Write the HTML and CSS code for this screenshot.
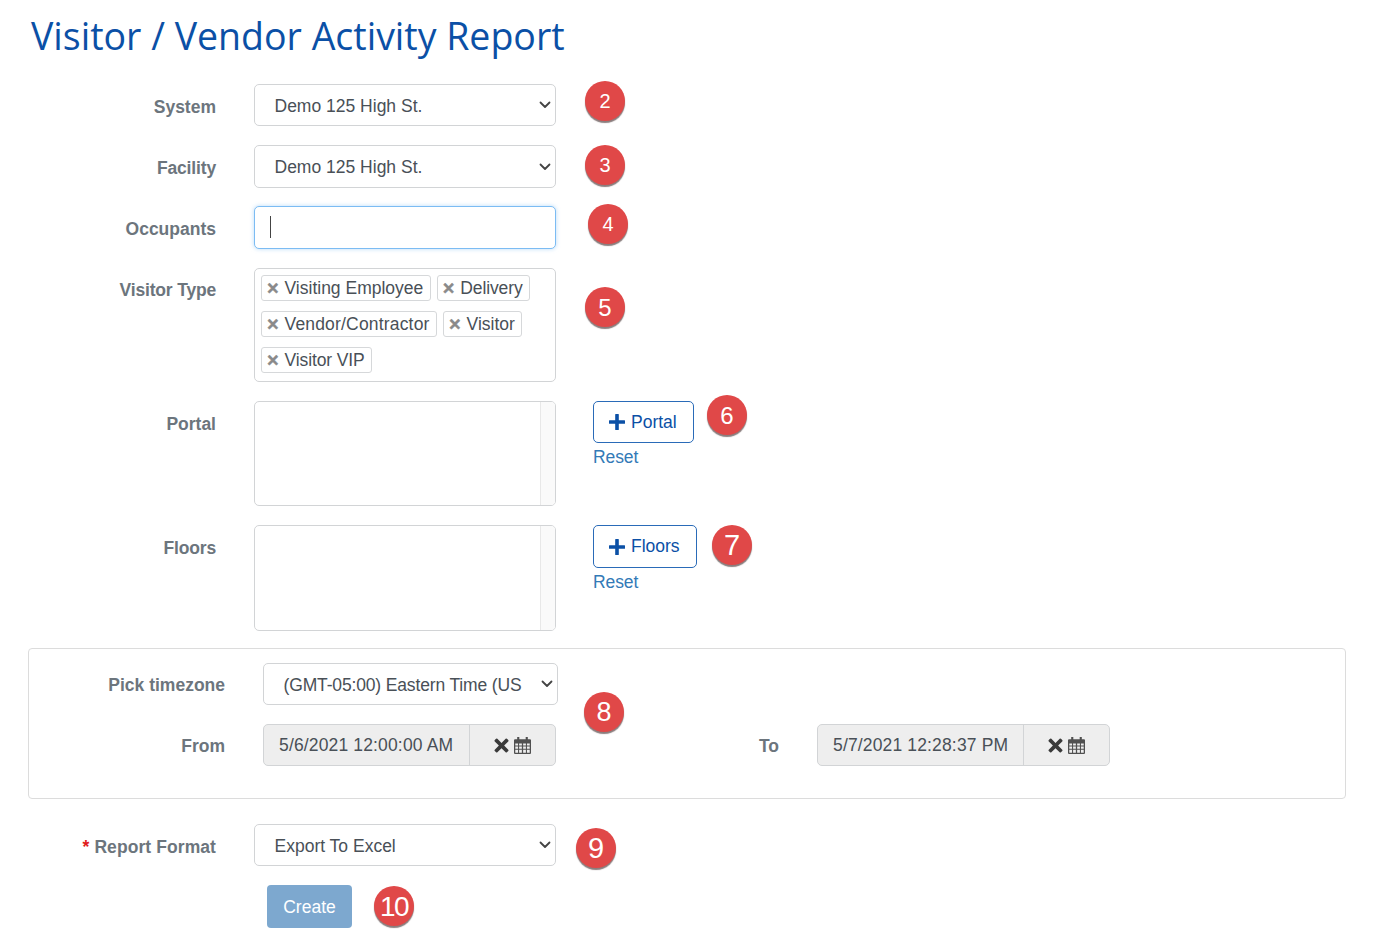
FILE: index.html
```html
<!DOCTYPE html>
<html lang="en">
<head>
<meta charset="utf-8">
<title>Visitor / Vendor Activity Report</title>
<link rel="stylesheet" href="styles.css">
</head>
<body>
<main class="page">
  <h1 class="title">Visitor / Vendor Activity Report</h1>

  <div class="row row-system">
    <label class="label">System</label>
    <select class="control"><option>Demo 125 High St.</option></select>
  </div>
  <div class="row row-facility">
    <label class="label label-narrow">Facility</label>
    <select class="control"><option>Demo 125 High St.</option></select>
  </div>
  <div class="row row-occupants">
    <label class="label">Occupants</label>
    <div class="control input-focus"><span class="caret"></span></div>
  </div>
  <div class="row row-type">
    <label class="label label-type">Visitor Type</label>
    <div class="control tags">
      <span class="tag"><b class="tag-x">×</b>Visiting Employee</span>
      <span class="tag tag-tight"><b class="tag-x">×</b>Delivery</span>
      <span class="tag tag-wide"><b class="tag-x">×</b>Vendor/Contractor</span>
      <span class="tag"><b class="tag-x">×</b>Visitor</span>
      <span class="tag tag-tight"><b class="tag-x">×</b>Visitor VIP</span>
    </div>
  </div>
  <div class="row row-portal">
    <label class="label">Portal</label>
    <div class="control listbox"><div class="scroll-strip"></div></div>
    <div class="actions">
      <button class="add-btn add-portal"><svg class="plus" viewBox="0 0 16 16"><path d="M6.200 .5a.5.5 0 0 1 .5-.5h2.600a.5.5 0 0 1 .5.5v5.700h5.700a.5.5 0 0 1 .5.5v2.600a.5.5 0 0 1-.5.5H9.800v5.700a.5.5 0 0 1-.5.5H6.700a.5.5 0 0 1-.5-.5V9.800H.5a.5.5 0 0 1-.5-.5V6.700a.5.5 0 0 1 .5-.5h5.700z"/></svg>Portal</button>
      <a class="reset">Reset</a>
    </div>
  </div>
  <div class="row row-floors">
    <label class="label label-floors">Floors</label>
    <div class="control listbox"><div class="scroll-strip"></div></div>
    <div class="actions">
      <button class="add-btn add-floors"><svg class="plus" viewBox="0 0 16 16"><path d="M6.200 .5a.5.5 0 0 1 .5-.5h2.600a.5.5 0 0 1 .5.5v5.700h5.700a.5.5 0 0 1 .5.5v2.600a.5.5 0 0 1-.5.5H9.800v5.700a.5.5 0 0 1-.5.5H6.700a.5.5 0 0 1-.5-.5V9.800H.5a.5.5 0 0 1-.5-.5V6.700a.5.5 0 0 1 .5-.5h5.700z"/></svg>Floors</button>
      <a class="reset">Reset</a>
    </div>
  </div>

  <section class="panel">
    <div class="panel-row panel-tz">
      <label class="label">Pick timezone</label>
      <select class="control tz"><option>(GMT-05:00) Eastern Time (US</option></select>
    </div>
    <div class="panel-row">
      <label class="label">From</label>
      <div class="date">
        <span class="date-value">5/6/2021 12:00:00 AM</span>
        <span class="date-icons">
          <svg class="ico-x" viewBox="0 0 16 16"><path d="M3.6 .8 8 5.2 12.4 .8a1 1 0 0 1 1.4 0l1.400 1.400a1 1 0 0 1 0 1.400L10.800 8l4.400 4.400a1 1 0 0 1 0 1.400l-1.400 1.400a1 1 0 0 1-1.400 0L8 10.800l-4.400 4.400a1 1 0 0 1-1.400 0L.8 13.800a1 1 0 0 1 0-1.400L5.200 8 .8 3.600a1 1 0 0 1 0-1.400L2.200 .8a1 1 0 0 1 1.400 0z"/></svg>
          <svg class="ico-cal" viewBox="0 0 16 16"><path fill-rule="evenodd" d="M3 0h2v2h6V0h2v2h2a1 1 0 0 1 1 1v12a1 1 0 0 1-1 1H1a1 1 0 0 1-1-1V3a1 1 0 0 1 1-1h2zM1.200 6v2h2.600V6zm3.600 0v2h2.600V6zm3.800 0v2h2.600V6zm3.600 0v2h2.600V6zM1.200 9v2h2.600V9zm3.600 0v2h2.600V9zm3.800 0v2h2.600V9zm3.600 0v2h2.600V9zM1.200 12v2.800h2.600V12zm3.600 0v2.800h2.600V12zm3.800 0v2.800h2.600V12zm3.600 0v2.800h2.600V12z"/></svg>
        </span>
      </div>
      <label class="label">To</label>
      <div class="date">
        <span class="date-value">5/7/2021 12:28:37 PM</span>
        <span class="date-icons">
          <svg class="ico-x" viewBox="0 0 16 16"><path d="M3.6 .8 8 5.2 12.4 .8a1 1 0 0 1 1.4 0l1.400 1.400a1 1 0 0 1 0 1.400L10.800 8l4.400 4.400a1 1 0 0 1 0 1.400l-1.400 1.400a1 1 0 0 1-1.400 0L8 10.800l-4.400 4.400a1 1 0 0 1-1.400 0L.8 13.800a1 1 0 0 1 0-1.400L5.200 8 .8 3.600a1 1 0 0 1 0-1.400L2.200 .8a1 1 0 0 1 1.400 0z"/></svg>
          <svg class="ico-cal" viewBox="0 0 16 16"><path fill-rule="evenodd" d="M3 0h2v2h6V0h2v2h2a1 1 0 0 1 1 1v12a1 1 0 0 1-1 1H1a1 1 0 0 1-1-1V3a1 1 0 0 1 1-1h2zM1.200 6v2h2.600V6zm3.600 0v2h2.600V6zm3.800 0v2h2.600V6zm3.600 0v2h2.600V6zM1.200 9v2h2.600V9zm3.600 0v2h2.600V9zm3.800 0v2h2.600V9zm3.600 0v2h2.600V9zM1.200 12v2.800h2.600V12zm3.600 0v2.800h2.600V12zm3.800 0v2.800h2.600V12zm3.600 0v2.800h2.600V12z"/></svg>
        </span>
      </div>
    </div>
  </section>

  <div class="row row-format">
    <label class="label label-format"><span class="req">*</span> Report Format</label>
    <select class="control"><option>Export To Excel</option></select>
  </div>
  <button class="create">Create</button>

  <span class="badge b2">2</span>
  <span class="badge b3">3</span>
  <span class="badge b4">4</span>
  <span class="badge b5">5</span>
  <span class="badge lg b6">6</span>
  <span class="badge lg b7">7</span>
  <span class="badge lg b8">8</span>
  <span class="badge xl b9">9</span>
  <span class="badge xl b10">10</span>
</main>
</body>
</html>
```

FILE: styles.css
```css
* { box-sizing: border-box; }
html, body { margin: 0; background: #fff; }
body { font-family: "Liberation Sans", Arial, sans-serif; font-size: 17.5px; color: #495057; }
.page { position: relative; width: 1378px; height: 951px; padding: 0 32px 0 28px; overflow: hidden; }
.title { margin: 0; padding: 11px 0 0 3px; height: 84px; font-family: "Open Sans", "Noto Sans", sans-serif; font-weight: 400; font-size: 37.5px; line-height: 50px; color: #0b50a6; }

.row { display: grid; grid-template-columns: 188px 302px auto; column-gap: 38px; align-items: start; }
.row .actions { margin-left: -1px; }
.row-system { height: 61px; }
.row-facility { height: 61px; }
.row-occupants { height: 62px; }
.row-type { height: 133px; }
.row-portal { height: 124px; }
.row-floors { height: 123px; }
.row-format { height: 61px; margin-top: 25px; }

.label { display: block; text-align: right; font-weight: 700; color: #6c757d; line-height: 22px; padding-top: 12px; white-space: nowrap; }
.label-narrow { letter-spacing: -.15px; }
.label-floors { letter-spacing: -.15px; }
.label-format { letter-spacing: .08px; }
.label-type { padding-top: 11px; letter-spacing: -.18px; }
.req { color: #e01b1b; }

.control { display: block; width: 302px; height: 42px; background: #fff; border: 1.5px solid #d2d4d6; border-radius: 5px; font: inherit; color: #495057; padding: 0 0 0 19.500px; }
select.control { appearance: none; -webkit-appearance: none; padding-top: 1px; padding-right: 24px; background-image: url("data:image/svg+xml,%3Csvg xmlns='http://www.w3.org/2000/svg' viewBox='0 0 12 8'%3E%3Cpath d='M1.500 1.500 6 6l4.500-4.500' fill='none' stroke='%23444' stroke-width='1.800' stroke-linecap='round' stroke-linejoin='round'/%3E%3C/svg%3E"); background-repeat: no-repeat; background-size: 12px 8px; background-position: right 4.500px center; }
.row-facility .control { height: 43px; }
.row-occupants .control { height: 43px; }

.input-focus { border-color: #7cbcf3; box-shadow: 0 0 4px rgba(124, 188, 243, .55); padding: 9px 0 0 15px; }
.caret { display: block; width: 1px; height: 22px; background: #444; }

.tags { display: flex; flex-wrap: wrap; align-content: flex-start; gap: 10px 6px; height: 114px; padding: 6px 6px; }
.tag { display: inline-flex; align-items: center; height: 26px; padding: 0 6.500px 0 5px; border: 1.5px solid #d6d8da; border-radius: 3px; line-height: 22px; white-space: nowrap; }
.tag-wide { letter-spacing: .18px; }
.tag-tight { letter-spacing: -.12px; }
.tag-x { width: 17.500px; color: #8a8a8a; font-size: 20px; line-height: 22px; letter-spacing: 0; -webkit-text-stroke: .4px #8a8a8a; }

.listbox { display: flex; justify-content: flex-end; padding: 0; overflow: hidden; }
.row-portal .listbox { height: 105px; }
.row-floors .listbox { height: 106px; }
.scroll-strip { width: 15px; height: 100%; background: #fafafa; border-left: 1px solid #e8e8e8; }

.actions { display: flex; flex-direction: column; align-items: flex-start; }
.add-btn { display: inline-flex; align-items: center; gap: 6px; height: 42px; padding: 0 0 0 15px; background: #fff; border: 1.5px solid #2a6bb8; border-radius: 5px; font: inherit; color: #0b50a6; }
.add-portal { width: 101px; }
.add-floors { width: 104px; height: 43px; }
.plus { width: 16px; height: 16px; fill: #0b50a6; }
.reset { margin-top: 3px; color: #337ab7; line-height: 22px; letter-spacing: -.1px; }

.panel { width: 1318px; height: 151px; border: 1px solid #dcdcdc; border-radius: 4px; padding: 14px 0 0; }
.panel .label { padding-top: 11px; }
.panel-row { display: grid; grid-template-columns: 196px 293px 185px 293px; column-gap: 38px; align-items: start; }
.panel-tz { height: 61px; }
.tz { width: 295px; letter-spacing: -.15px; }

.date { display: flex; width: 293px; height: 42px; background: #eee; border: 1.5px solid #d2d4d6; border-radius: 5px; }
.date-value { flex: 1; padding-left: 15px; line-height: 41px; letter-spacing: .15px; white-space: nowrap; }
.date-icons { display: flex; align-items: center; justify-content: center; gap: 5px; width: 86px; padding-right: 1px; border-left: 1.5px solid #d2d4d6; }
.ico-x { width: 15px; height: 15px; fill: #3a3a3a; }
.ico-cal { width: 17px; height: 17px; fill: #505050; }

.create { display: block; width: 85px; height: 43px; margin-left: 239px; padding-top: 2px; background: #7da8cf; border: 0; border-radius: 4px; color: #fff; font: inherit; }

.badge { position: absolute; width: 40px; height: 40px; border-radius: 50%; background: #e04848; color: #fff; text-align: center; font-size: 20px; line-height: 40px; box-shadow: 0 2px 1px #8a7d7d; }
.lg { font-size: 24px; }
.xl { font-size: 29px; line-height: 40px; }
.b2 { left: 585px; top: 81px; }
.b3 { left: 585px; top: 145px; }
.b4 { left: 588px; top: 204px; }
.b5 { left: 585px; top: 287px; font-size: 24px; line-height: 42px; }
.b6 { left: 707px; top: 395px; line-height: 41px; }
.b7 { left: 712px; top: 525px; font-size: 29px; }
.b8 { left: 584px; top: 692px; font-size: 27px; }
.b9 { left: 576px; top: 828px; }
.b10 { left: 374px; top: 886px; font-size: 28px; letter-spacing: -1.500px; line-height: 41px; }
```
